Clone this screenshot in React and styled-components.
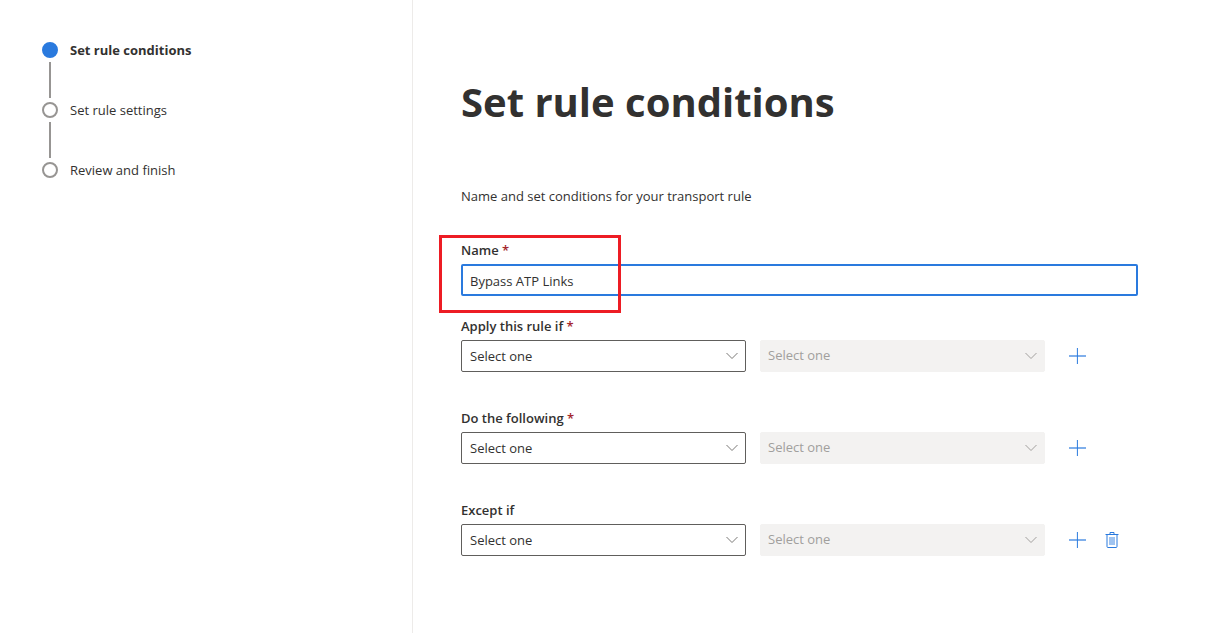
import React, { useState } from "react";
import styled, { createGlobalStyle } from "styled-components";

const steps = ["Set rule conditions", "Set rule settings", "Review and finish"];

const conditions = [
  { id: "apply", label: "Apply this rule if", required: true },
  { id: "action", label: "Do the following", required: true },
  { id: "except", label: "Except if", removable: true },
];

const Dropdown = (props) => (
  <SelectWrap>
    <Select {...props}>
      <option>Select one</option>
    </Select>
    <Chevron viewBox="0 0 12 8" aria-hidden="true">
      <path d="M0.5 1 L6 6.5 L11.5 1" />
    </Chevron>
  </SelectWrap>
);

const Condition = ({ id, label, required, removable }) => (
  <Field>
    <Label htmlFor={id}>
      {label} {required && <Required>*</Required>}
    </Label>
    <Row>
      <Dropdown id={id} />
      <Dropdown aria-label={`${label} value`} disabled />
      <Actions>
        <IconButton type="button" aria-label="Add condition">
          <svg width="18" height="16" viewBox="0 0 18 16">
            <path d="M1 8h17" stroke="#2a7ade" strokeWidth="1.2" />
            <path d="M9.4 0v16" stroke="#2a7ade" strokeWidth="1" />
          </svg>
        </IconButton>
        {removable && (
          <IconButton type="button" aria-label="Remove condition">
            <svg width="14" height="16" viewBox="0 0 14 16">
              <path d="M0.5 2.5h13M5 2.5v-2h4v2" stroke="#2a7ade" />
              <path d="M2 2.5v12q0 1 1 1h8q1 0 1-1v-12" stroke="#2a7ade" />
              <path d="M5 5v8M7 5v8M9 5v8" stroke="#2a7ade" strokeWidth="0.9" />
            </svg>
          </IconButton>
        )}
      </Actions>
    </Row>
  </Field>
);

const App = () => {
  const [name, setName] = useState("Bypass ATP Links");

  return (
    <Page>
      <GlobalStyle />
      <Sidebar>
        <Steps>
          {steps.map((step, i) => (
            <Step key={step} $active={i === 0}>
              <Dot $active={i === 0} />
              {step}
              {i < steps.length - 1 && <Connector />}
            </Step>
          ))}
        </Steps>
      </Sidebar>
      <Main>
        <Title>Set rule conditions</Title>
        <Intro>Name and set conditions for your transport rule</Intro>
        <Form>
          <NameField>
            <Label htmlFor="name">
              Name <Required>*</Required>
            </Label>
            <Input
              id="name"
              value={name}
              onChange={(e) => setName(e.target.value)}
            />
            <Highlight />
          </NameField>
          <Conditions>
            {conditions.map((item) => (
              <Condition key={item.id} {...item} />
            ))}
          </Conditions>
        </Form>
      </Main>
    </Page>
  );
};

// STYLED COMPONENTS

const GlobalStyle = createGlobalStyle`
  * {
    box-sizing: border-box;
  }
  body {
    margin: 0;
    background: #fff;
    color: #323130;
    font-family: "Segoe UI", "Open Sans", "Noto Sans", sans-serif;
    font-size: 13px;
    line-height: 20px;
  }
`;

const Page = styled.div`
  display: flex;
  min-height: 100vh;
`;

const Sidebar = styled.nav`
  flex: 0 0 413px;
  padding: 40px 42px;
  border-right: 1px solid #edebe9;
`;

const Steps = styled.ol`
  display: flex;
  flex-direction: column;
  margin: 0;
  padding: 0;
  list-style: none;
`;

const Step = styled.li`
  display: grid;
  grid-template-columns: 16px 1fr;
  column-gap: 12px;
  align-items: center;
  font-weight: ${(props) => (props.$active ? 700 : 400)};
`;

const Dot = styled.span`
  width: 16px;
  height: 16px;
  border: 2px solid ${(props) => (props.$active ? "#2a7ade" : "#979593")};
  border-radius: 50%;
  background: ${(props) => (props.$active ? "#2a7ade" : "#fff")};
`;

const Connector = styled.span`
  grid-column: 1;
  justify-self: center;
  width: 2px;
  height: 36px;
  margin: 2px 0;
  background: #979593;
`;

const Main = styled.main`
  flex: 1;
  padding: 74px 73px 74px 48px;
`;

const Title = styled.h1`
  margin: 0;
  font-size: 40px;
  font-weight: 700;
  line-height: 56px;
`;

const Intro = styled.p`
  margin: 56px 0 34px;
`;

const Form = styled.form`
  display: flex;
  flex-direction: column;
  gap: 20px;
`;

const Conditions = styled.div`
  display: flex;
  flex-direction: column;
  gap: 36px;
`;

const Field = styled.div`
  display: flex;
  flex-direction: column;
  gap: 4px;
`;

const NameField = styled(Field)`
  position: relative;
`;

const Highlight = styled.div`
  position: absolute;
  top: -5px;
  left: -22px;
  width: 182px;
  height: 78px;
  border: 3px solid #ed1c24;
  pointer-events: none;
`;

const Label = styled.label`
  font-weight: 600;
`;

const Required = styled.span`
  color: #a4262c;
`;

const Input = styled.input`
  width: 100%;
  height: 32px;
  padding: 2px 7px 0;
  border: 2px solid #2a7ade;
  border-radius: 2px;
  outline: none;
  background: #fff;
  color: inherit;
  font: inherit;
`;

const Row = styled.div`
  display: flex;
`;

const SelectWrap = styled.div`
  position: relative;
  flex: 1;

  & + & {
    margin-left: 14px;
  }
`;

const Select = styled.select`
  display: block;
  width: 100%;
  height: 32px;
  padding: 0 28px 0 8px;
  border: 1px solid #605e5c;
  border-radius: 2px;
  appearance: none;
  background: #fff;
  color: inherit;
  font: inherit;

  &:disabled {
    padding: 0 28px 2px 7px;
    border-color: #f3f2f1;
    background: #f3f2f1;
    color: #a19f9d;
    opacity: 1;
  }
`;

const Chevron = styled.svg`
  position: absolute;
  top: 12px;
  right: 8px;
  width: 12px;
  height: 8px;
  fill: none;
  stroke: #7a7876;
  pointer-events: none;

  ${Select}:disabled + & {
    stroke: #a19f9d;
  }
`;

const Actions = styled.div`
  display: flex;
  flex: 0 0 93px;
  gap: 3px;
  padding-left: 16px;
`;

const IconButton = styled.button`
  display: flex;
  align-items: center;
  justify-content: center;
  width: 32px;
  height: 32px;
  padding: 0;
  border: none;
  background: transparent;
  cursor: pointer;

  svg {
    fill: none;
  }
`;

export default App;
